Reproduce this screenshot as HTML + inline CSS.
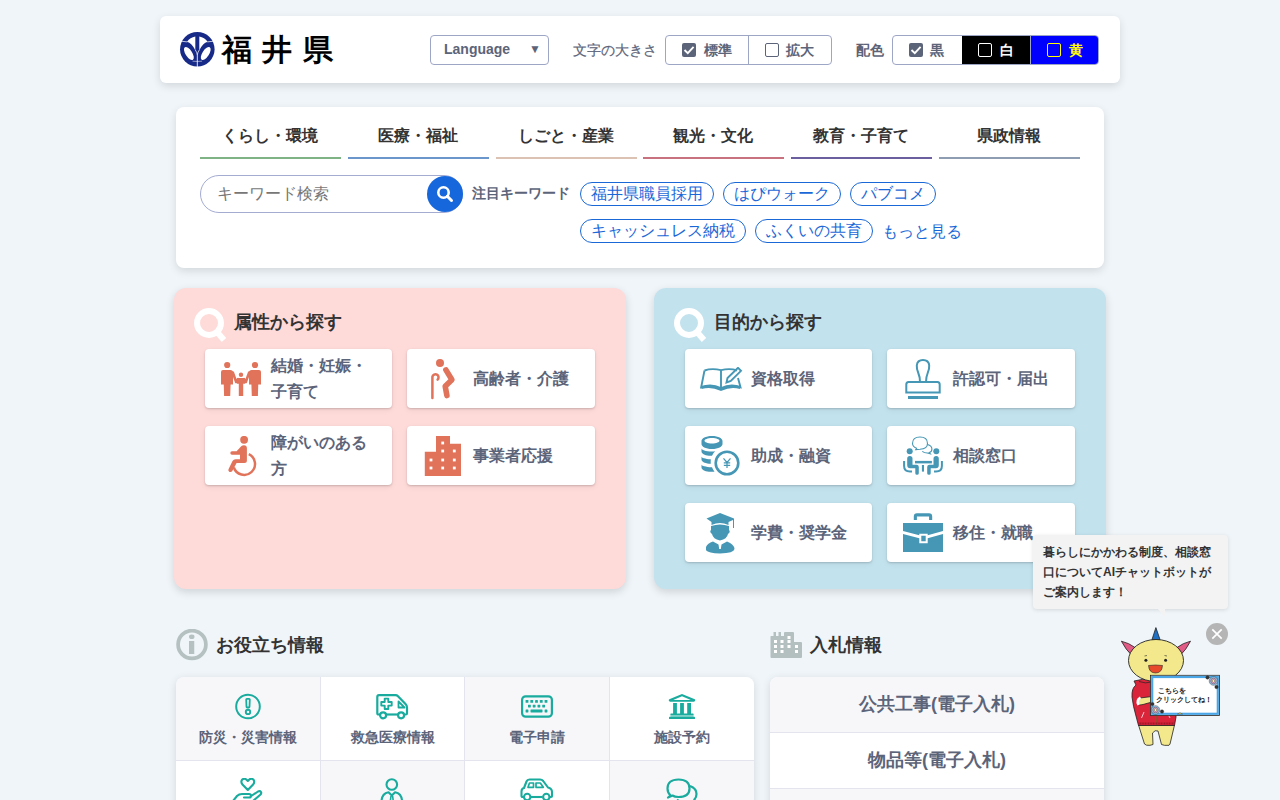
<!DOCTYPE html>
<html lang="ja">
<head>
<meta charset="utf-8">
<style>
*{box-sizing:border-box;margin:0;padding:0}
html,body{width:1280px;height:800px;overflow:hidden}
body{background:#eff5f9;font-family:"Liberation Sans",sans-serif;color:#333;position:relative}
.abs{position:absolute}
.card{position:absolute;background:#fff}
.t{position:absolute;white-space:nowrap;line-height:1}
.g{color:#5c6479}
.b{font-weight:bold}
#hdr{left:160px;top:16px;width:960px;height:67px;border-radius:6px;box-shadow:0 3px 8px rgba(0,0,0,.12)}
.seg{position:absolute;top:35px;height:30px;border:1px solid #9ea6c6;border-radius:4px}
.cb{position:absolute;width:14px;height:14px;border-radius:2px}
.cb.on{background:#5c6479}
.cb.off{border:1.5px solid #5c6479;background:#fff}
#nav{left:176px;top:107px;width:928px;height:161px;border-radius:8px;box-shadow:0 3px 8px rgba(0,0,0,.12)}
.tab{position:absolute;top:157px;width:141px;height:2px}
.tabt{position:absolute;top:126px;width:141px;margin-left:-1px;text-align:center;font-size:16px;font-weight:bold;color:#333;line-height:20px}
.pill{position:absolute;height:24px;border:1px solid #1a68d8;border-radius:12px;color:#1a68d8;font-size:16px;line-height:22px;padding:0 10px;white-space:nowrap}
.panel{position:absolute;top:288px;width:452px;height:301px;border-radius:12px;box-shadow:0 3px 9px rgba(0,0,0,.14)}
.ic{position:absolute;background:#fff;width:187px;height:59px;border-radius:4px;box-shadow:0 1px 2px rgba(0,0,0,.17),0 2px 6px rgba(0,0,0,.06)}
.ic .lab{position:absolute;left:66px;top:0;height:59px;display:flex;align-items:center;font-size:16px;font-weight:bold;color:#5c6479;line-height:26px}
.ic svg{position:absolute}
.cell{position:absolute;width:144px;height:83px}
.cell .lab{position:absolute;left:0;width:100%;top:53px;text-align:center;font-size:14px;font-weight:bold;color:#5c6479;line-height:16px}
.cell svg{position:absolute}
</style>
</head>
<body>

<!-- HEADER -->
<div id="hdr" class="card"></div>
<svg class="abs" style="left:176px;top:28px" width="42" height="42" viewBox="0 0 800 800">
  <circle cx="406" cy="405" r="329" fill="#172a88"/>
  <path d="M210 264 A244 244 0 0 1 368 164 L368 425 Q300 290 210 264 Z" fill="#fff"/>
  <path d="M602 264 A244 244 0 0 0 444 164 L444 425 Q512 290 602 264 Z" fill="#fff"/>
  <ellipse cx="246" cy="487" rx="64" ry="142" transform="rotate(-33 243 487)" fill="#fff"/>
  <ellipse cx="566" cy="487" rx="64" ry="142" transform="rotate(33 569 487)" fill="#fff"/>
  <g stroke="#fff" stroke-width="14" fill="none">
    <path d="M70 248 L215 265 M742 248 L597 265"/>
    <path d="M366 415 Q398 460 406 510 M446 415 Q414 460 406 510"/>
    <path d="M406 505 L406 760" stroke-width="16"/>
    <path d="M315 632 Q406 642 497 632" stroke-width="10"/>
  </g>
</svg>
<div class="t b" style="left:221.5px;top:34.5px;font-size:30px;color:#000;letter-spacing:10.6px">福井県</div>

<div class="seg" style="left:430px;width:119px"></div>
<div class="t b g" style="left:444px;top:42px;font-size:14px">Language</div>
<div class="t g" style="left:529px;top:43px;font-size:12px">&#9660;</div>
<div class="t g" style="left:573px;top:43px;font-size:14px;-webkit-text-stroke:0.2px #5c6479">文字の大きさ</div>

<div class="seg" style="left:665px;width:167px"></div>
<div class="abs" style="left:748px;top:35px;width:1px;height:30px;background:#9ea6c6"></div>
<div class="cb on" style="left:682px;top:43px"><svg width="14" height="14" viewBox="0 0 14 14"><path d="M2.5 7 L5.8 10.2 L11.6 3.9" stroke="#fff" stroke-width="1.9" fill="none"/></svg></div>
<div class="t b g" style="left:704px;top:43px;font-size:14px">標準</div>
<div class="cb off" style="left:765px;top:43px"></div>
<div class="t b g" style="left:786px;top:43px;font-size:14px">拡大</div>

<div class="t b g" style="left:856px;top:43px;font-size:14px">配色</div>
<div class="seg" style="left:892px;width:207px;overflow:hidden">
</div>
<div class="abs" style="left:962px;top:36px;width:68px;height:28px;background:#000"></div>
<div class="abs" style="left:1030px;top:35px;width:1px;height:30px;background:#9ea6c6"></div><div class="abs" style="left:1031px;top:36px;width:67px;height:28px;background:#0000ff;border-radius:0 3px 3px 0"></div>
<div class="cb on" style="left:909px;top:43px"><svg width="14" height="14" viewBox="0 0 14 14"><path d="M2.5 7 L5.8 10.2 L11.6 3.9" stroke="#fff" stroke-width="1.9" fill="none"/></svg></div>
<div class="t b g" style="left:930px;top:43px;font-size:14px">黒</div>
<div class="cb" style="left:978px;top:43px;border:1.5px solid #fff"></div>
<div class="t b" style="left:1000px;top:43px;font-size:14px;color:#fff">白</div>
<div class="cb" style="left:1047px;top:43px;border:1.5px solid #ff0"></div>
<div class="t b" style="left:1069px;top:43px;font-size:14px;color:#ff0">黄</div>

<!-- NAV -->
<div id="nav" class="card"></div>
<div class="tab" style="left:200px;background:#7fb385"></div>
<div class="tab" style="left:348px;background:#6b96cc"></div>
<div class="tab" style="left:496px;background:#dcc2b2"></div>
<div class="tab" style="left:643px;background:#c9727f"></div>
<div class="tab" style="left:791px;background:#6c5f9f"></div>
<div class="tab" style="left:939px;background:#8e9db2"></div>
<div class="tabt" style="left:200px">くらし・環境</div>
<div class="tabt" style="left:348px">医療・福祉</div>
<div class="tabt" style="left:496px">しごと・産業</div>
<div class="tabt" style="left:643px">観光・文化</div>
<div class="tabt" style="left:791px">教育・子育て</div>
<div class="tabt" style="left:939px">県政情報</div>

<div class="abs" style="left:200px;top:175px;width:263px;height:38px;border:1px solid #a4acd2;border-radius:19px"></div>
<div class="t" style="left:217px;top:186px;font-size:16px;color:#777">キーワード検索</div>
<div class="abs" style="left:427px;top:176px;width:36px;height:36px;border-radius:50%;background:#1767dc"></div>
<svg class="abs" style="left:427px;top:176px" width="36" height="36" viewBox="0 0 36 36">
  <circle cx="16.5" cy="16.5" r="5.2" stroke="#fff" stroke-width="2.6" fill="none"/>
  <path d="M20.3 20.3 L24.5 24.5" stroke="#fff" stroke-width="3" stroke-linecap="round"/>
</svg>
<div class="t b g" style="left:472px;top:186px;font-size:14px">注目キーワード</div>
<div class="pill" style="left:580px;top:182px">福井県職員採用</div>
<div class="pill" style="left:723px;top:182px">はぴウォーク</div>
<div class="pill" style="left:850px;top:182px">パブコメ</div>
<div class="pill" style="left:580px;top:219px">キャッシュレス納税</div>
<div class="pill" style="left:755px;top:219px">ふくいの共育</div>
<div class="t" style="left:882px;top:224px;font-size:16px;color:#1a68d8">もっと見る</div>

<!-- PANELS -->
<div class="panel" style="left:174px;background:#fedad9"></div>
<div class="panel" style="left:654px;background:#c2e2ee"></div>
<!-- panel titles -->
<svg class="abs" style="left:192px;top:306px" width="38" height="40" viewBox="0 0 38 40">
  <circle cx="17" cy="17" r="12" stroke="#fff" stroke-opacity="1" stroke-width="6" fill="none"/>
  <path d="M25 26 L32 34" stroke="#fff" stroke-opacity="1" stroke-width="6"/>
</svg>
<div class="t b" style="left:234px;top:313px;font-size:18px;color:#333">属性から探す</div>
<svg class="abs" style="left:672px;top:306px" width="38" height="40" viewBox="0 0 38 40">
  <circle cx="17" cy="17" r="12" stroke="#fff" stroke-opacity="1" stroke-width="6" fill="none"/>
  <path d="M25 26 L32 34" stroke="#fff" stroke-opacity="1" stroke-width="6"/>
</svg>
<div class="t b" style="left:714px;top:313px;font-size:18px;color:#333">目的から探す</div>

<!-- pink items -->
<div class="ic" style="left:205px;top:349px">
  <svg style="left:16px;top:12px" width="41" height="36" viewBox="0 0 41 36">
    <g fill="#e0735a">
    <circle cx="6.2" cy="4" r="3.1"/><circle cx="34" cy="4" r="3.1"/><circle cx="20" cy="13.7" r="2.2"/>
    <path d="M0 11 Q0 9 2 9 L9.5 9 Q11.5 9 12 11 L12 23.4 L9.6 23.4 L9.2 35 L3.1 35 L2.75 23.4 L0 23.4 Z"/>
    <path d="M40 11 Q40 9 38 9 L30.5 9 Q28.5 9 28 11 L28 23.4 L30.4 23.4 L30.8 35 L36.9 35 L37.25 23.4 L40 23.4 Z"/>
    <path d="M15.9 18.5 Q15.9 17.1 17.3 17.1 L22.7 17.1 Q24.1 17.1 24.1 18.5 L24.1 22.7 L22.2 22.7 L22.2 35 L17.8 35 L17.8 22.7 L15.9 22.7 Z"/>
    </g>
    <path d="M11.8 11.5 L15.2 21 L17 18.2 M28.2 11.5 L24.8 21 L23 18.2" stroke="#e0735a" stroke-width="2.6" fill="none" stroke-linejoin="round" stroke-linecap="round"/>
  </svg>
  <div class="lab" style="width:110px">結婚・妊娠・子育て</div>
</div>
<div class="ic" style="left:407px;top:349px;width:188px">
  <svg style="left:23px;top:10px" width="28" height="41" viewBox="0 0 28 41">
    <circle cx="10" cy="4" r="4" fill="#e0735a"/>
    <path d="M15.9 10.9 L21.9 20.7 L15.2 27.2 L16.9 36.6" stroke="#e0735a" stroke-width="5.6" fill="none" stroke-linecap="round" stroke-linejoin="round"/>
    <path d="M2.4 39 L2.4 17.8 A3.1 3.1 0 1 1 7.6 20.6" stroke="#e0735a" stroke-width="2.5" fill="none" stroke-linecap="round"/>
  </svg>
  <div class="lab">高齢者・介護</div>
</div>
<div class="ic" style="left:205px;top:426px">
  <svg style="left:22px;top:10px" width="32" height="42" viewBox="0 0 32 42">
    <g fill="#e0735a">
    <circle cx="17.1" cy="3.8" r="3.9"/>
    <path d="M14.2 10.3 Q15.5 9.3 17 9.3 Q19.9 9.3 19.9 12.3 L19.9 24.6 Q19.9 27.1 17.4 27.1 L9.6 27.1 L5.3 35 Q4.3 36.6 2.5 35.9 Q0.8 35 1.5 33.3 L5.5 25 Q6.5 23.3 8.6 23.3 L13 23.3 L13 18.7 L5 18.7 Q3.3 18.7 3.3 17 Q3.3 15.3 5 15.3 L9.6 15.3 Z"/>
    </g>
    <path d="M21.75 18.1 A10.9 10.9 0 1 1 6.8 31.5" stroke="#e0735a" stroke-width="2.5" fill="none"/>
  </svg>
  <div class="lab" style="width:110px">障がいのある方</div>
</div>
<div class="ic" style="left:407px;top:426px;width:188px">
  <svg style="left:17px;top:10px" width="38" height="41" viewBox="0 0 38 41">
    <path fill="#e0735a" d="M0.8 15.8 L12 15.8 L12 0 L26 0 L26 7.8 L37 7.8 L37 40 L0.8 40 Z"/>
    <g fill="#fff">
      <rect x="17.3" y="5.6" width="2.8" height="2.8"/>
      <rect x="17.3" y="13.6" width="2.8" height="2.8"/><rect x="28.9" y="13.6" width="2.8" height="2.8"/>
      <rect x="5.6" y="22.6" width="2.8" height="2.8"/><rect x="17.3" y="22.6" width="2.8" height="2.8"/><rect x="28.9" y="22.6" width="2.8" height="2.8"/>
      <rect x="5.6" y="30.6" width="2.8" height="2.8"/><rect x="17.3" y="30.6" width="2.8" height="2.8"/><rect x="28.9" y="30.6" width="2.8" height="2.8"/>
    </g>
  </svg>
  <div class="lab">事業者応援</div>
</div>

<!-- blue items -->
<div class="ic" style="left:685px;top:349px">
  <svg style="left:15px;top:18px" width="44" height="25" viewBox="0 0 44 25">
    <g stroke="#4597b5" fill="none" stroke-width="1.9">
      <path d="M4.5 3.5 Q12 1 21 3.2 Q30 1 37 3.5"/>
      <path d="M4.5 3.5 L1.2 20.2 Q11 16.5 21 21 Q31 16.5 40.5 20.2 L38 11"/>
      <path d="M21 3.2 L21 21"/>
      <path d="M1.2 20.8 Q11 17.8 21 22.5 Q31 17.8 40.5 20.8" stroke-width="2.6"/>
      <path d="M29.5 15.5 L30.5 11 L41 0.8 L44 3.8 L33.8 14 Z" transform="translate(-3,0)"/>
    </g>
  </svg>
  <div class="lab">資格取得</div>
</div>
<div class="ic" style="left:887px;top:349px;width:188px">
  <svg style="left:17px;top:9px" width="38" height="46" viewBox="0 0 38 46">
    <g stroke="#4597b5" fill="none" stroke-width="2">
      <path d="M16 24 Q16 19 14.3 15 Q12.5 10.5 12.8 7.5 Q13.3 2 19 2 Q24.7 2 25.2 7.5 Q25.5 10.5 23.7 15 Q22 19 22 24"/>
      <path d="M4.5 24 Q2.3 24 2.3 26.5 L2.3 34.5 L35.7 34.5 L35.7 26.5 Q35.7 24 33.5 24 Z"/>
    </g>
    <rect x="4" y="38" width="30" height="3" fill="#4597b5"/>
  </svg>
  <div class="lab">許認可・届出</div>
</div>
<div class="ic" style="left:685px;top:426px">
  <svg style="left:16px;top:9px" width="40" height="41" viewBox="0 0 40 41">
    <g fill="#4597b5">
      <path d="M11 1 C4.5 1 0.5 3.5 0.5 6 L0.5 9 C0.5 11.5 4.5 14 11 14 C17.5 14 21.5 11.5 21.5 9 L21.5 6 C21.5 3.5 17.5 1 11 1 Z M11 3 C15.5 3 18.5 4.5 18.5 5.8 C18.5 7 15.5 8.5 11 8.5 C6.5 8.5 3.5 7 3.5 5.8 C3.5 4.5 6.5 3 11 3 Z"/>
      <path d="M0.5 13.5 L0.5 16.5 C0.5 18.5 3.5 20.2 8 20.8 L11 20.8 Q12 18 14.2 16.2 Q12.5 16.5 11 16.5 C4.5 16.5 0.5 15 0.5 13.5 Z"/>
      <path d="M0.5 21.5 L0.5 24.5 C0.5 26.5 3.5 28.2 8 28.7 L9.8 28.7 Q9.6 27.5 9.8 24.3 C4 24 0.5 22.8 0.5 21.5 Z"/>
      <path d="M0.5 29.5 L0.5 32.5 C0.5 34.5 3.5 36.3 8 36.8 L13.5 36.8 Q11.8 34.5 11 32.3 C4.5 32 0.5 30.8 0.5 29.5 Z"/>
    </g>
    <circle cx="26" cy="28" r="11.3" stroke="#4597b5" stroke-width="2.6" fill="#fff"/>
    <path d="M22.5 23.3 L26 27.5 L29.5 23.3 M26 27.5 L26 33 M22.8 27.8 L29.2 27.8 M22.8 30.3 L29.2 30.3" stroke="#4597b5" stroke-width="1.2" fill="none"/>
  </svg>
  <div class="lab">助成・融資</div>
</div>
<div class="ic" style="left:887px;top:426px;width:188px">
  <svg style="left:16px;top:10px" width="42" height="41" viewBox="0 0 42 41">
    <g fill="#4597b5">
      <circle cx="6.7" cy="15.3" r="3"/><circle cx="33.3" cy="15.3" r="3"/>
      <path d="M4.2 22.5 Q4.2 20 6.8 20 Q9.5 20 9.5 22.5 L9.5 28.8 L13.5 28.8 Q15.8 28.8 15.8 31 L15.8 37.2 Q15.8 38.8 14 38.8 Q12.3 38.8 12.3 37.2 L12.3 32.2 L7.2 32.2 Q4.2 32.2 4.2 29 Z"/>
      <path d="M35.8 22.5 Q35.8 20 33.2 20 Q30.5 20 30.5 22.5 L30.5 28.8 L26.5 28.8 Q24.2 28.8 24.2 31 L24.2 37.2 Q24.2 38.8 26 38.8 Q27.7 38.8 27.7 37.2 L27.7 32.2 L32.8 32.2 Q35.8 32.2 35.8 29 Z"/>
      <rect x="12" y="24.9" width="16.9" height="2.5"/>
      <rect x="18.9" y="29" width="2.1" height="6.6"/>
    </g>
    <g stroke="#4597b5" fill="none" stroke-width="2">
      <path d="M1.1 24.9 L1.1 30 Q1.1 35.5 7 35.5 L9 35.5"/>
      <path d="M38.9 24.9 L38.9 30 Q38.9 35.5 33 35.5 L31 35.5"/>
    </g>
    <g stroke="#4597b5" stroke-width="1.1" fill="none">
      <path d="M12.8 13.6 L13.6 12.3 Q9.5 10.5 9.5 7.5 Q9.5 1 17 1 Q24.5 1 24.5 7.5 Q24.5 13 17 13.3 Q15 13.3 12.8 13.6 Z"/>
      <path d="M24.5 8.5 Q28.9 9.8 28.9 13 Q28.9 15.8 26.3 16.6 L27.3 17.8 L24.3 17 Q21.3 17 19.3 15.3"/>
    </g>
  </svg>
  <div class="lab">相談窓口</div>
</div>
<div class="ic" style="left:685px;top:503px">
  <svg style="left:21px;top:10px" width="30" height="41" viewBox="0 0 30 41">
    <g fill="#4597b5">
      <path d="M0.5 5.5 L14 0 L28 5.5 L28 15 L27 15 L27 7 L22.5 9 L22.5 12 Q18 10 14 10 Q10 10 5.5 12 L5.5 9 Z"/>
      <path d="M5 13 Q9.5 11.5 14 11.5 Q18.5 11.5 23 13 L23 17 Q24.2 17.5 23.5 19.5 L22 21 Q21 26 14 27.5 Q7 26 6 21 L4.5 19.5 Q3.8 17.5 5 17 Z"/>
      <path d="M7 28.5 L12.5 31.5 L13.2 36 L14.8 36 L15.5 31.5 L21 28.5 Q28 31 28.5 36 Q28 40 14 40.5 Q0 40 -0.5 36 Q0 31 7 28.5 Z"/>
    </g>
  </svg>
  <div class="lab">学費・奨学金</div>
</div>
<div class="ic" style="left:887px;top:503px;width:188px">
  <svg style="left:16px;top:10px" width="41" height="41" viewBox="0 0 41 41">
    <path d="M10.8 7 L10.8 3.5 Q10.8 0.3 14 0.3 L26 0.3 Q29.2 0.3 29.2 3.5 L29.2 7 L26.1 7 L26.1 3.4 L13.9 3.4 L13.9 7 Z" fill="#4597b5"/>
    <path fill="#4597b5" d="M0 10 L40 10 L40 18 L24.7 22.3 L24.7 20.8 L16.3 20.8 L16.3 22.3 L0 18 Z M0 21 L16.3 25.3 L16.3 30.3 L24.7 30.3 L24.7 25.3 L40 21 L40 39 L0 39 Z M18.3 22.8 L22.7 22.8 L22.7 28.3 L18.3 28.3 Z"/>
  </svg>
  <div class="lab">移住・就職</div>
</div>
<!-- BOTTOM: useful info -->
<svg class="abs" style="left:176px;top:629px" width="32" height="32" viewBox="0 0 32 32">
  <circle cx="16" cy="15.5" r="13.9" stroke="#b5c1c1" stroke-width="3.75" fill="none"/>
  <ellipse cx="15.75" cy="7.75" rx="2.75" ry="2.3" fill="#b5c1c1"/>
  <rect x="13" y="12" width="5.25" height="13" fill="#b5c1c1"/>
</svg>
<div class="t b" style="left:216px;top:636px;font-size:18px;color:#333">お役立ち情報</div>

<div class="abs" style="left:176px;top:677px;width:578px;height:140px;border-radius:8px 8px 0 0;overflow:hidden;box-shadow:0 2px 8px rgba(0,0,0,.12)">
  <div class="cell" style="left:0;top:0;background:#f7f7fa"></div>
  <div class="cell" style="left:145px;top:0;background:#fff"></div>
  <div class="cell" style="left:289px;top:0;background:#f7f7fa"></div>
  <div class="cell" style="left:434px;top:0;background:#fff"></div>
  <div class="cell" style="left:0;top:84px;background:#fff"></div>
  <div class="cell" style="left:145px;top:84px;background:#f7f7fa"></div>
  <div class="cell" style="left:289px;top:84px;background:#fff"></div>
  <div class="cell" style="left:434px;top:84px;background:#f7f7fa"></div>
  <div class="abs" style="left:144px;top:0;width:1px;height:200px;background:#e4e4ee"></div>
  <div class="abs" style="left:288px;top:0;width:1px;height:200px;background:#e4e4ee"></div>
  <div class="abs" style="left:433px;top:0;width:1px;height:200px;background:#e4e4ee"></div>
  <div class="abs" style="left:0;top:83px;width:600px;height:1px;background:#e4e4ee"></div>
</div>
<div class="t b g" style="left:176px;top:730px;width:144px;text-align:center;font-size:14px">防災・災害情報</div>
<div class="t b g" style="left:321px;top:730px;width:144px;text-align:center;font-size:14px">救急医療情報</div>
<div class="t b g" style="left:465px;top:730px;width:144px;text-align:center;font-size:14px">電子申請</div>
<div class="t b g" style="left:610px;top:730px;width:144px;text-align:center;font-size:14px">施設予約</div>

<!-- teal icons row1 -->
<svg class="abs" style="left:234px;top:693px" width="28" height="28" viewBox="0 0 28 28">
  <circle cx="14" cy="13.5" r="11.8" stroke="#19ab9d" stroke-width="2" fill="none"/>
  <path d="M12.2 6.5 Q12.2 5.9 12.9 5.9 L15.1 5.9 Q15.8 5.9 15.8 6.5 L15.5 13.8 Q15.5 14.5 14.8 14.5 L13.2 14.5 Q12.5 14.5 12.5 13.8 Z" stroke="#19ab9d" stroke-width="1.8" fill="none" stroke-linejoin="round"/>
  <circle cx="14" cy="18.9" r="2.2" stroke="#19ab9d" stroke-width="1.9" fill="none"/>
</svg>
<svg class="abs" style="left:376px;top:694px" width="34" height="28" viewBox="0 0 34 28">
  <g stroke="#19ab9d" stroke-width="2.2" fill="none" stroke-linejoin="round">
    <path d="M4 20.5 L2.5 20.5 Q1.3 20.5 1.3 19.3 L1.3 3 Q1.3 1.2 3 1.2 L19.5 1.2 Q21 1.2 22 2.2 L29.5 10 Q31 11.5 31 13.5 L31 19.3 Q31 20.5 29.8 20.5 L28.5 20.5"/>
    <path d="M10 20.5 L22 20.5"/>
    <circle cx="7.1" cy="21.3" r="3"/><circle cx="25.1" cy="21.3" r="3"/>
    <path d="M22.5 7.5 L25.5 10.5 L28.5 13.5 L22.5 13.5 Z" stroke-width="1.8"/>
    <path d="M8.7 4.6 L12.3 4.6 L12.3 8 L15.7 8 L15.7 11.6 L12.3 11.6 L12.3 15 L8.7 15 L8.7 11.6 L5.3 11.6 L5.3 8 L8.7 8 Z" stroke-width="1.9"/>
  </g>
</svg>
<svg class="abs" style="left:520px;top:694px" width="34" height="25" viewBox="0 0 34 25">
  <rect x="2.1" y="2.3" width="29.8" height="20.4" rx="3.5" stroke="#19ab9d" stroke-width="2.2" fill="none"/>
  <g fill="#19ab9d"><rect x="5.6" y="6" width="2.8" height="2.8" rx=".4"/><rect x="10.35" y="6" width="2.8" height="2.8" rx=".4"/><rect x="15.1" y="6" width="2.8" height="2.8" rx=".4"/><rect x="19.85" y="6" width="2.8" height="2.8" rx=".4"/><rect x="24.6" y="6" width="2.8" height="2.8" rx=".4"/><rect x="8.0" y="10.7" width="2.8" height="2.8" rx=".4"/><rect x="12.75" y="10.7" width="2.8" height="2.8" rx=".4"/><rect x="17.5" y="10.7" width="2.8" height="2.8" rx=".4"/><rect x="22.25" y="10.7" width="2.8" height="2.8" rx=".4"/><rect x="5.6" y="15.6" width="2.8" height="2.8" rx=".4"/><rect x="24.6" y="15.6" width="2.8" height="2.8" rx=".4"/><rect x="10.5" y="15.6" width="12" height="2.8" rx=".4"/></g>
</svg>
<svg class="abs" style="left:668px;top:693px" width="28" height="27" viewBox="0 0 28 27">
  <g fill="#19ab9d">
    <path d="M14 1 L26.8 6.3 Q27.8 7 27 8 L26 8.8 L2 8.8 L1 8 Q0.3 7 1.3 6.3 Z M14 3.3 L5.2 6.9 L22.8 6.9 Z" fill-rule="evenodd"/>
    <rect x="5.1" y="10" width="3.8" height="11"/><rect x="12.1" y="10" width="3.8" height="11"/><rect x="19.2" y="10" width="3.8" height="11"/>
    <rect x="2.4" y="20.5" width="23.2" height="1.8" rx=".6"/>
    <rect x="2.4" y="22.3" width="23.2" height="1.5" opacity=".6"/>
    <rect x="1" y="23.8" width="26" height="2.3" rx=".6"/>
  </g>
</svg>
<!-- teal icons row2 -->
<svg class="abs" style="left:232px;top:778px" width="32" height="24" viewBox="0 0 32 24">
  <path d="M15.8 12 L10.5 6.5 Q8.5 4 10 1.8 Q12 -0.2 14.3 1.5 L15.8 3 L17.3 1.5 Q19.6 -0.2 21.6 1.8 Q23.1 4 21.1 6.5 Z" stroke="#19ab9d" stroke-width="2.1" fill="none" stroke-linejoin="round"/>
  <path d="M1 23 L5 18 Q7 16 10 16 L17 16 Q19 16 19 18 Q19 19.5 17 19.5 L12 19.5 M18.5 18.5 L26 13.5 Q28 12.5 29 14 Q29.8 15.5 28 17 L21 23" stroke="#19ab9d" stroke-width="2.1" fill="none" stroke-linejoin="round" stroke-linecap="round"/>
</svg>
<svg class="abs" style="left:380px;top:778px" width="24" height="24" viewBox="0 0 24 24">
  <circle cx="11.8" cy="6.5" r="5.3" stroke="#19ab9d" stroke-width="2.1" fill="none"/>
  <path d="M1.5 24 Q1.5 15.5 8.5 14.2 L11.8 17.5 L15.1 14.2 Q22.1 15.5 22.1 24" stroke="#19ab9d" stroke-width="2.1" fill="none" stroke-linejoin="round"/>
  <path d="M11 18 L10.2 24 M12.6 18 L13.4 24" stroke="#19ab9d" stroke-width="1.6"/>
</svg>
<svg class="abs" style="left:520px;top:778px" width="34" height="23" viewBox="0 0 34 23">
  <g stroke="#19ab9d" stroke-width="2.1" fill="none" stroke-linejoin="round">
    <path d="M3.5 19 L2.5 19 Q1.5 19 1.5 18 L1.5 13.5 Q1.5 10.5 4 10 L6.5 3.5 Q7.3 1.5 9.5 1.5 L20 1.5 Q22 1.5 23.2 3 L28 9.5 Q32 10.5 32 14 L32 18 Q32 19 31 19 L30 19"/>
    <path d="M11 19 L22.5 19"/>
    <circle cx="7.2" cy="19" r="3.2"/><circle cx="26.3" cy="19" r="3.2"/>
    <path d="M9.5 5 L13.5 5 L13.5 9.3 L8 9.3 Z M16 5 L20.3 5 L23.3 9.3 L16 9.3 Z" stroke-width="1.7"/>
  </g>
</svg>
<svg class="abs" style="left:666px;top:778px" width="33" height="24" viewBox="0 0 33 24">
  <g stroke="#19ab9d" stroke-width="2.2" fill="none" stroke-linejoin="round">
    <path d="M4.5 17.5 Q1.5 14.5 1.5 10.5 Q1.5 1.5 12.5 1.5 Q23.5 1.5 23.5 10.5 Q23.5 19 12.5 19 Q8.5 19 6.5 17.5 L2 19.5 Z"/>
    <path d="M24 8 Q30.5 10.5 30.5 16 Q30.5 19.5 28.3 21.5 L30 24 L26 23 Q23 24.5 19 24.5 Q14 24.5 11 21.5"/>
  </g>
</svg>

<!-- BOTTOM: bid info -->
<svg class="abs" style="left:770px;top:632px" width="32" height="26" viewBox="0 0 32 26">
  <path fill="#b4c0c0" d="M0.5 4.5 Q0.5 4 1 4 L3.5 4 L3.5 0 L6 0 L6 4 L8.5 4 L8.5 0 L11 0 L11 4 L14 4 L14 1 Q14 0 15 0 L23 0 Q24 0 24 1 L24 10 L31 10 Q32 10 32 11 L32 25 Q32 26 31 26 L1.5 26 Q0.5 26 0.5 25 Z"/>
  <g fill="#fff">
    <rect x="4" y="8" width="3" height="3"/><rect x="10.5" y="8" width="3" height="3"/><rect x="17.5" y="4" width="3" height="3"/><rect x="17.5" y="8" width="3" height="3"/>
    <rect x="4" y="13" width="3" height="3"/><rect x="10.5" y="13" width="3" height="3"/><rect x="17.5" y="13" width="3" height="3"/><rect x="25" y="13" width="3" height="3"/>
    <rect x="4" y="18" width="3" height="3"/><rect x="10.5" y="18" width="3" height="3"/><rect x="25" y="18" width="3" height="3"/>
  </g>
</svg>
<div class="t b" style="left:810px;top:636px;font-size:18px;color:#333">入札情報</div>
<div class="abs" style="left:770px;top:677px;width:334px;height:140px;border-radius:8px 8px 0 0;overflow:hidden;box-shadow:0 2px 8px rgba(0,0,0,.12);background:#fff">
  <div class="abs" style="left:0;top:0;width:334px;height:55px;background:#f7f7fa"></div>
  <div class="abs" style="left:0;top:55px;width:334px;height:1px;background:#e4e4ee"></div>
  <div class="abs" style="left:0;top:111px;width:334px;height:1px;background:#e4e4ee"></div>
  <div class="abs" style="left:0;top:112px;width:334px;height:40px;background:#f7f7fa"></div>
  <div class="t b g" style="left:0;top:17px;width:334px;text-align:center;font-size:18px;line-height:20px">公共工事(電子入札)</div>
  <div class="t b g" style="left:0;top:73px;width:334px;text-align:center;font-size:18px;line-height:20px">物品等(電子入札)</div>
</div>

<!-- CHATBOT -->
<div class="abs" style="left:1033px;top:535px;width:195px;height:74px;background:#f3f3f3;border-radius:4px;box-shadow:0 1px 4px rgba(0,0,0,.12)"></div>
<svg class="abs" style="left:1157px;top:608px" width="10" height="10" viewBox="0 0 10 10"><path d="M0 0 L8 0 L8 9 Z" fill="#f3f3f3"/></svg>
<div class="abs" style="left:1043px;top:542px;width:172px;font-size:12px;font-weight:bold;line-height:20px;color:#333">暮らしにかかわる制度、相談窓口についてAIチャットボットがご案内します！</div>
<svg class="abs" style="left:1206px;top:623px" width="22" height="22" viewBox="0 0 22 22">
  <circle cx="11" cy="11" r="11" fill="#b5b5b5"/>
  <path d="M6.3 6.3 L15.7 15.7 M15.7 6.3 L6.3 15.7" stroke="#fff" stroke-width="1.7"/>
</svg>
<svg class="abs" style="left:1110px;top:615px" width="130" height="140" viewBox="1110 615 130 140">
  <g stroke="#222" stroke-width=".8" stroke-linejoin="round">
  <path d="M1152 639.5 L1155.9 627.6 L1160 639.5 Z" fill="#1f6fc2"/>
  <path d="M1131.5 655 Q1126 650 1121.4 641.2 Q1129 643 1135 647.5 Z" fill="#e25b86"/>
  <path d="M1180.5 655 Q1186 650 1190.5 641.2 Q1183 643 1177 647.5 Z" fill="#e25b86"/>
  <path d="M1138.5 725 L1144.5 744 Q1146 745.8 1150 745.3 L1153 744.5 L1152.5 733 Q1155 729.5 1158 731 L1161.5 744.5 Q1164 745.8 1169 745.3 L1170 744 L1174.5 725 Z" fill="#f3e98c"/>
  <path d="M1134 681 Q1142 678.5 1152 679.5 L1168 679.5 Q1175.5 684 1176 702 L1176 717 L1174.5 725.5 L1138.5 725.5 L1136.5 718 Q1133 706 1132 697 Q1131.5 688 1136 685 Z" fill="#d9243a"/>
  </g>
  <path d="M1156 715 L1156 725" stroke="#6b6a20" stroke-width="1"/>
  <path d="M1138.5 723.5 L1174.5 723.5" stroke="#a01828" stroke-width="1.8" stroke-dasharray="1 .6"/>
  <path d="M1144 712 L1141.5 718 M1168 714 L1170 718" stroke="#fff" stroke-width=".9" opacity=".85"/>
  <ellipse cx="1156" cy="660.5" rx="27.5" ry="21" fill="#f3e98c" stroke="#222" stroke-width=".9"/>
  <path d="M1139 681.5 Q1146 684 1151 682" stroke="#222" stroke-width=".7" fill="none"/>
  <circle cx="1145.9" cy="660.2" r="1.5" fill="#222"/><circle cx="1165.6" cy="660.2" r="1.5" fill="#222"/>
  <path d="M1144.5 656 L1147 655.5 M1164.5 655.5 L1167 656" stroke="#222" stroke-width=".6"/>
  <path d="M1148.5 665.5 Q1155.5 664.5 1162.5 665.5 Q1162 673 1155.5 673 Q1149 673 1148.5 665.5 Z" fill="#e64a2a" stroke="#222" stroke-width=".6"/>
  <path d="M1140 698 Q1136.5 700 1137.5 703.5 Q1139 706 1143 704.5 L1157.5 700.5 L1156 696 Z" fill="#f3e98c" stroke="#222" stroke-width=".8"/>
  <path d="M1140.5 697.5 Q1136 700 1138.5 705" stroke="#fff" stroke-width="2.4" fill="none"/>
  <rect x="1150.5" y="675.3" width="69" height="40.2" fill="#fff" stroke="#222" stroke-width=".8"/>
  <rect x="1152.2" y="677" width="65.6" height="36.8" fill="none" stroke="#4aa6e6" stroke-width="2.2"/>
  <g stroke="#222" stroke-width=".4">
  <circle cx="1213.5" cy="681" r="4.3" fill="#9cc8ee"/><circle cx="1213.5" cy="681" r="2.8" fill="#eeaad0"/><circle cx="1213.5" cy="681" r="1.4" fill="#fff8b0"/>
  <circle cx="1207.5" cy="677.5" r="1.7" fill="#333"/><circle cx="1216.5" cy="687" r="1.7" fill="#333"/>
  <circle cx="1155.5" cy="710" r="4.3" fill="#9cc8ee"/><circle cx="1155.5" cy="710" r="2.8" fill="#eeaad0"/><circle cx="1155.5" cy="710" r="1.4" fill="#fff8b0"/>
  <circle cx="1152.5" cy="704" r="1.6" fill="#333"/><circle cx="1162" cy="711.5" r="1.7" fill="#333"/>
  <path d="M1177.5 714 Q1180 711.5 1182.5 714 Z" fill="#f3e98c"/>
  </g>
  <text x="1158.3" y="692.6" font-size="7.2" font-weight="bold" fill="#222" font-family="Liberation Sans, sans-serif">こちらを</text>
  <text x="1156.3" y="701.8" font-size="7.2" font-weight="bold" fill="#222" font-family="Liberation Sans, sans-serif">クリックしてね！</text>
</svg>
</body>
</html>
